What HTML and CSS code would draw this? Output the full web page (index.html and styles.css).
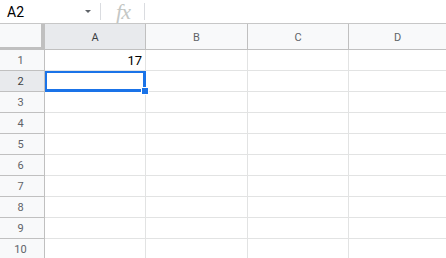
FILE: index.html
```html
<!DOCTYPE html>
<html>
<head>
<meta charset="utf-8">
<link rel="stylesheet" href="styles.css">
</head>
<body>
<div class="formula-bar">
  <div class="name-box"><span class="name">A2</span><span class="caret"></span></div>
  <div class="sep"></div>
  <div class="fx">fx</div>
  <div class="sep"></div>
  <div class="formula-input"></div>
</div>
<div class="sheet">
  <div class="corner"></div>
  <div class="col-head sel">A</div>
  <div class="col-head">B</div>
  <div class="col-head">C</div>
  <div class="col-head last">D</div>

  <div class="row-head">1</div><div class="cell num">17</div><div class="cell"></div><div class="cell"></div><div class="cell last"></div>
  <div class="row-head sel">2</div><div class="cell active"><span class="handle"></span></div><div class="cell"></div><div class="cell"></div><div class="cell last"></div>
  <div class="row-head">3</div><div class="cell"></div><div class="cell"></div><div class="cell"></div><div class="cell last"></div>
  <div class="row-head">4</div><div class="cell"></div><div class="cell"></div><div class="cell"></div><div class="cell last"></div>
  <div class="row-head">5</div><div class="cell"></div><div class="cell"></div><div class="cell"></div><div class="cell last"></div>
  <div class="row-head">6</div><div class="cell"></div><div class="cell"></div><div class="cell"></div><div class="cell last"></div>
  <div class="row-head">7</div><div class="cell"></div><div class="cell"></div><div class="cell"></div><div class="cell last"></div>
  <div class="row-head">8</div><div class="cell"></div><div class="cell"></div><div class="cell"></div><div class="cell last"></div>
  <div class="row-head">9</div><div class="cell"></div><div class="cell"></div><div class="cell"></div><div class="cell last"></div>
  <div class="row-head">10</div><div class="cell"></div><div class="cell"></div><div class="cell"></div><div class="cell last"></div>
</div>
</body>
</html>
```

FILE: styles.css
```css
html, body {
  margin: 0;
  padding: 0;
  background: #ffffff;
  font-family: Roboto, "Liberation Sans", Arial, sans-serif;
  overflow: hidden;
}

.formula-bar {
  display: flex;
  align-items: center;
  height: 23px;
  border-bottom: 1px solid #c7c7c7;
  box-sizing: content-box;
}

.name-box {
  width: 100px;
  display: flex;
  align-items: center;
  justify-content: space-between;
  padding: 0 9px 0 7px;
  box-sizing: border-box;
  height: 100%;
}

.name {
  font-size: 14px;
  color: #000;
}

.caret {
  width: 0;
  height: 0;
  border-left: 3px solid transparent;
  border-right: 3px solid transparent;
  border-top: 3px solid #5f6368;
}

.sep {
  width: 1px;
  height: 17px;
  background: #dadce0;
}

.fx {
  width: 43px;
  height: 23px;
  display: flex;
  align-items: center;
  justify-content: center;
  font-family: "Liberation Serif", "DejaVu Serif", serif;
  font-style: italic;
  font-size: 22px;
  line-height: 1;
  color: #c4c7c5;
  letter-spacing: -1px;
  padding-left: 1px;
  box-sizing: border-box;
}

.formula-input {
  flex: 1;
}

.sheet {
  display: grid;
  grid-template-columns: 45px 101px 102px 101px 1fr;
  grid-template-rows: 26px repeat(10, 21px);
}

.corner {
  background: #f8f9fa;
  box-shadow: inset -4px -3px 0 0 #c0c0c0;
}

.col-head {
  background: #f8f9fa;
  border-right: 1px solid #c0c0c0;
  border-bottom: 1px solid #c0c0c0;
  font-size: 11px;
  color: #5f6368;
  display: flex;
  align-items: center;
  justify-content: center;
  padding-top: 1px;
}

.col-head.sel {
  background: #e8eaed;
  color: #3c4043;
}

.col-head.last {
  border-right: none;
}

.row-head {
  background: #f8f9fa;
  border-right: 1px solid #c0c0c0;
  border-bottom: 1px solid #c0c0c0;
  font-size: 11px;
  color: #5f6368;
  display: flex;
  align-items: center;
  justify-content: center;
  padding-right: 3px;
}

.row-head.sel {
  background: #e8eaed;
  color: #3c4043;
}

.cell {
  border-right: 1px solid #e2e3e3;
  border-bottom: 1px solid #e2e3e3;
  position: relative;
}

.cell.last {
  border-right: none;
}

.cell.num {
  font-size: 13px;
  color: #000;
  text-align: right;
  padding-right: 3px;
  line-height: 21px;
}

.cell.active {
  box-shadow: inset 0 0 0 2px #1a73e8;
  border-right-color: #1a73e8;
  border-bottom-color: #1a73e8;
}

.handle {
  position: absolute;
  right: -4px;
  bottom: -4px;
  width: 6px;
  height: 6px;
  background: #1a73e8;
  border: 1px solid #fff;
  z-index: 2;
}
```
